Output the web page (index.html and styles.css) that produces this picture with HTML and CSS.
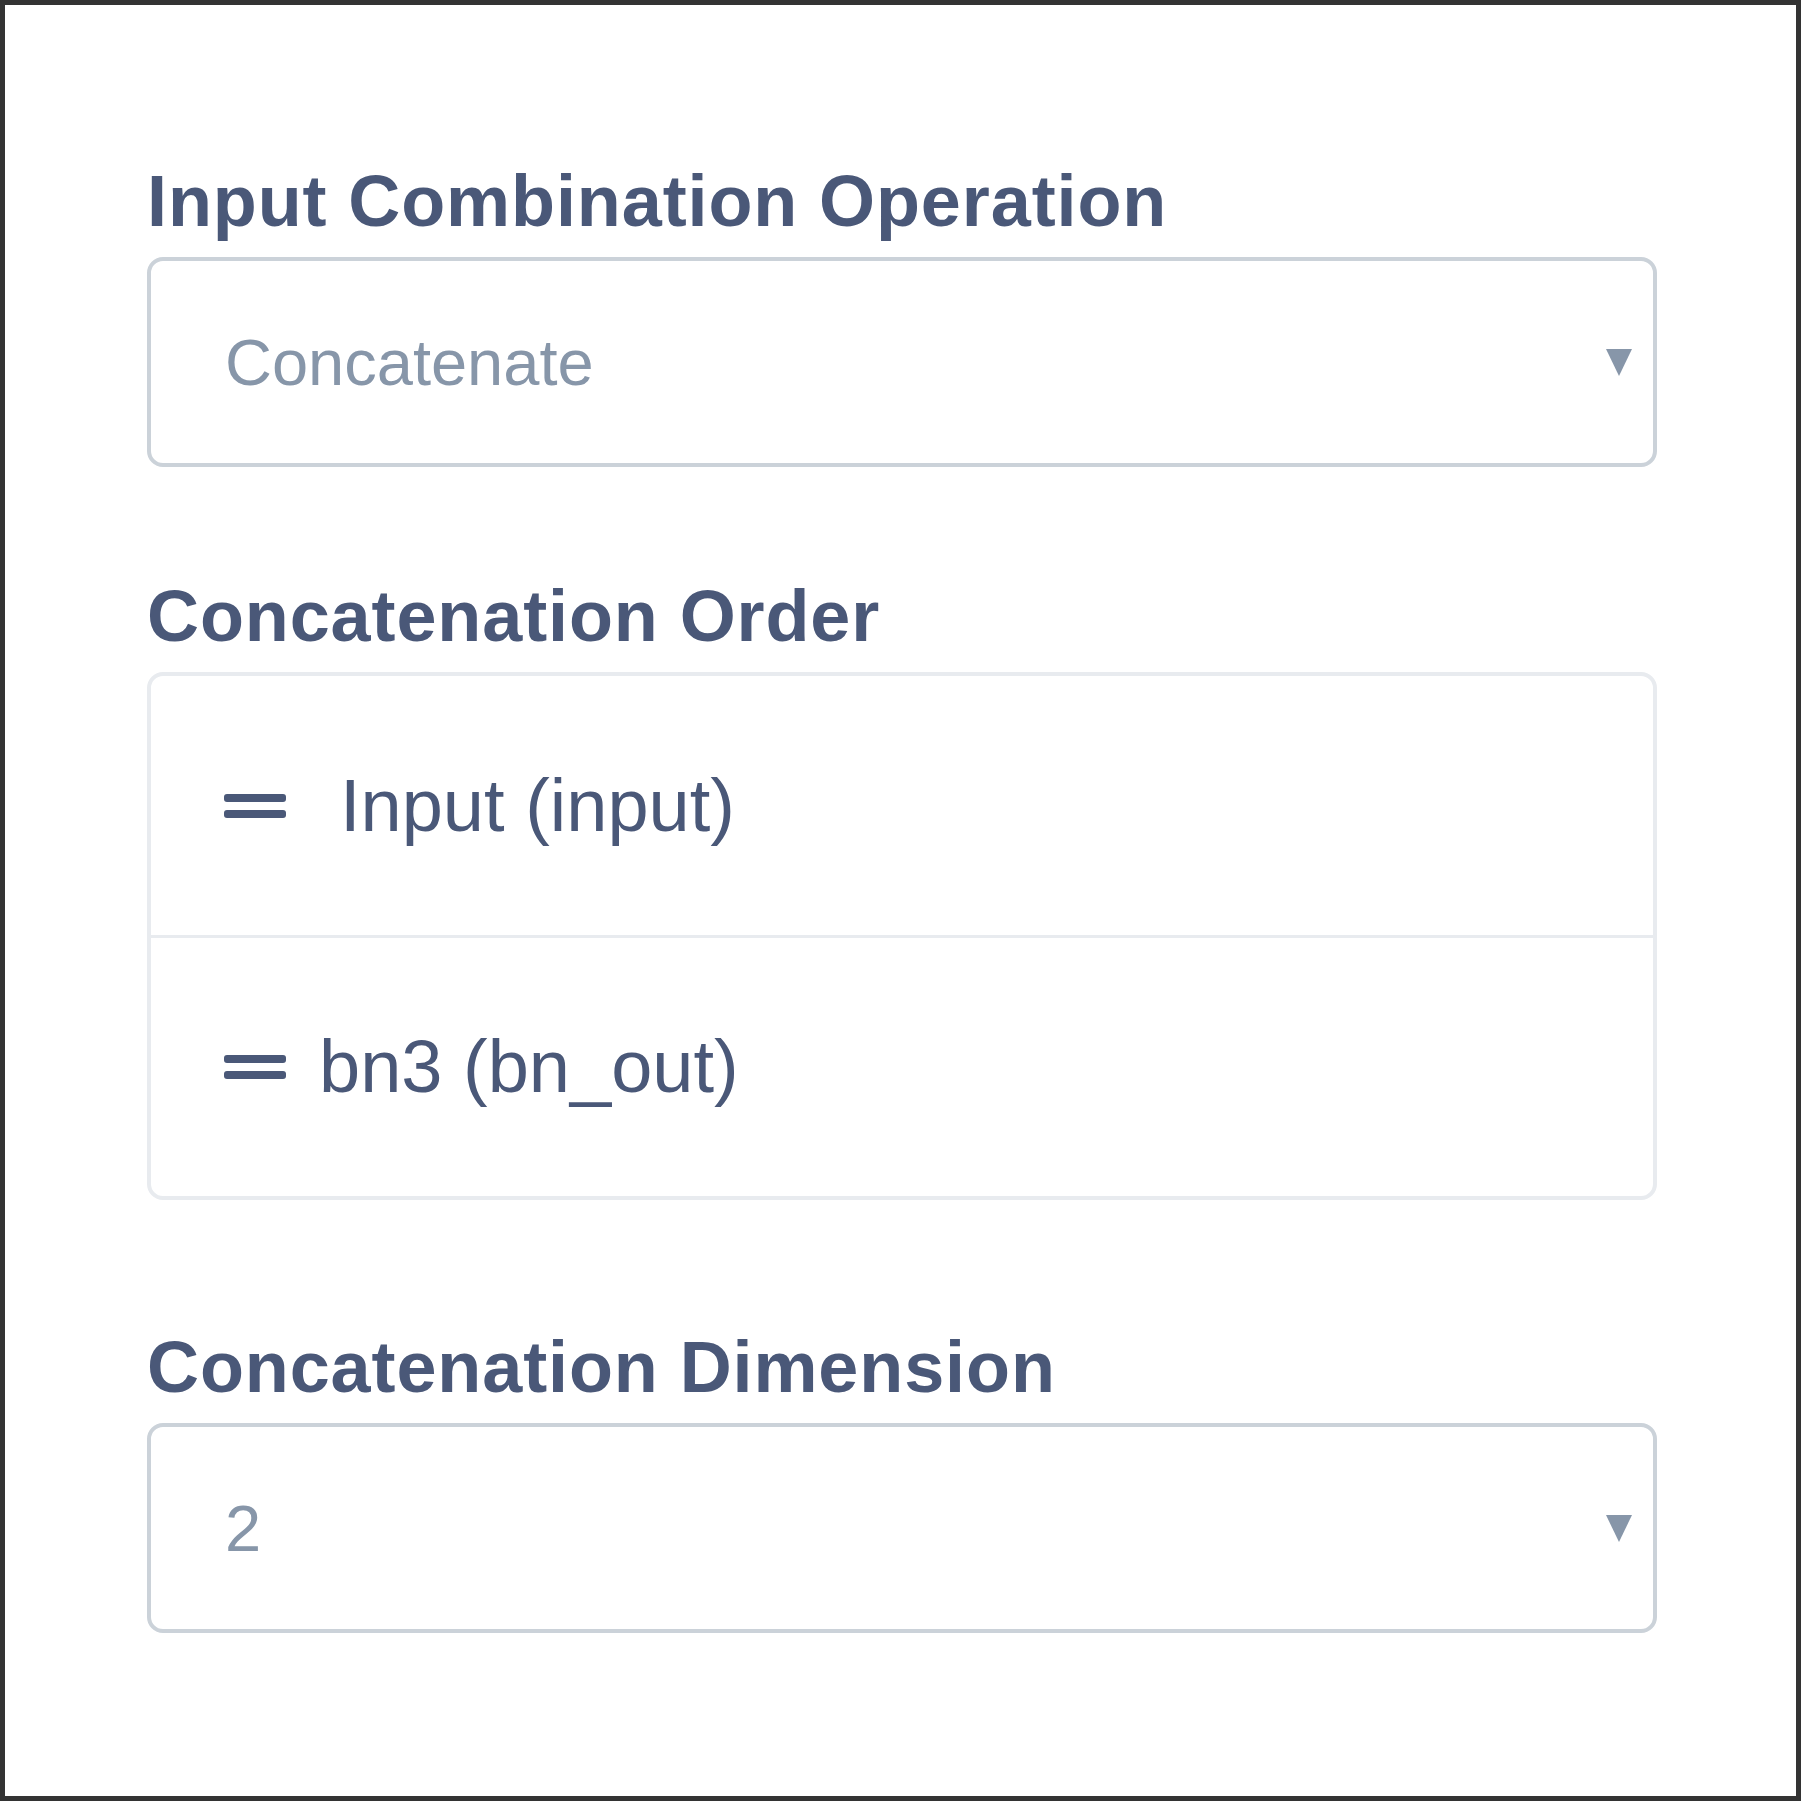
FILE: index.html
```html
<!DOCTYPE html>
<html lang="en">
<head>
<meta charset="utf-8">
<title>Input Combination</title>
<link rel="stylesheet" href="styles.css">
</head>
<body>
<div class="frame">
  <div class="panel">
    <section class="field field-op">
      <div class="field-label">Input Combination Operation</div>
      <div class="select">
        <span class="select-value">Concatenate</span>
        <span class="caret"></span>
      </div>
    </section>

    <section class="field field-order">
      <div class="field-label">Concatenation Order</div>
      <div class="order-list">
        <div class="order-row">
          <span class="handle"><span class="bar"></span><span class="bar"></span></span>
          <span class="order-text order-text-wide">Input (input)</span>
        </div>
        <div class="order-row">
          <span class="handle"><span class="bar"></span><span class="bar"></span></span>
          <span class="order-text">bn3 (bn_out)</span>
        </div>
      </div>
    </section>

    <section class="field field-dim">
      <div class="field-label">Concatenation Dimension</div>
      <div class="select">
        <span class="select-value">2</span>
        <span class="caret"></span>
      </div>
    </section>
  </div>
</div>
</body>
</html>
```

FILE: styles.css
```css
html, body {
  margin: 0;
  padding: 0;
  background: #ffffff;
}

.frame {
  width: 1801px;
  height: 1801px;
  box-sizing: border-box;
  border: 5px solid #333333;
  background: #ffffff;
  font-family: "Liberation Sans", Arial, sans-serif;
}

.panel {
  padding: 160px 139px 0 142px;
  display: flex;
  flex-direction: column;
}

.field {
  display: flex;
  flex-direction: column;
}

.field-order {
  margin-top: 113px;
}

.field-dim {
  margin-top: 131px;
}

.field-label {
  font-weight: 700;
  font-size: 72px;
  line-height: 72px;
  letter-spacing: 0.9px;
  color: #4a5878;
  margin-bottom: 20px;
  white-space: nowrap;
}

.select {
  height: 210px;
  box-sizing: border-box;
  border: 4px solid #cbd2d9;
  border-radius: 16px;
  display: flex;
  align-items: center;
  justify-content: space-between;
  padding: 0 21px 0 74px;
}

.select-value {
  font-size: 65px;
  line-height: 65px;
  color: #8796a9;
}

.caret {
  width: 0;
  height: 0;
  border-left: 13.5px solid transparent;
  border-right: 13.5px solid transparent;
  border-top: 27px solid #8796a9;
}

.order-list {
  box-sizing: border-box;
  border: 4px solid #e8ebef;
  border-radius: 16px;
  display: flex;
  flex-direction: column;
}

.order-row {
  height: 259px;
  box-sizing: border-box;
  display: flex;
  align-items: center;
  padding-left: 73px;
}

.order-row + .order-row {
  height: 261px;
  border-top: 3px solid #e8ebef;
}

.handle {
  width: 62px;
  display: flex;
  flex-direction: column;
  gap: 8px;
}

.bar {
  display: block;
  height: 8px;
  border-radius: 3px;
  background: #4a5878;
}

.order-text {
  font-size: 74px;
  line-height: 74px;
  color: #4a5878;
  margin-left: 33px;
  white-space: nowrap;
}

.order-text-wide {
  margin-left: 54px;
}
```
